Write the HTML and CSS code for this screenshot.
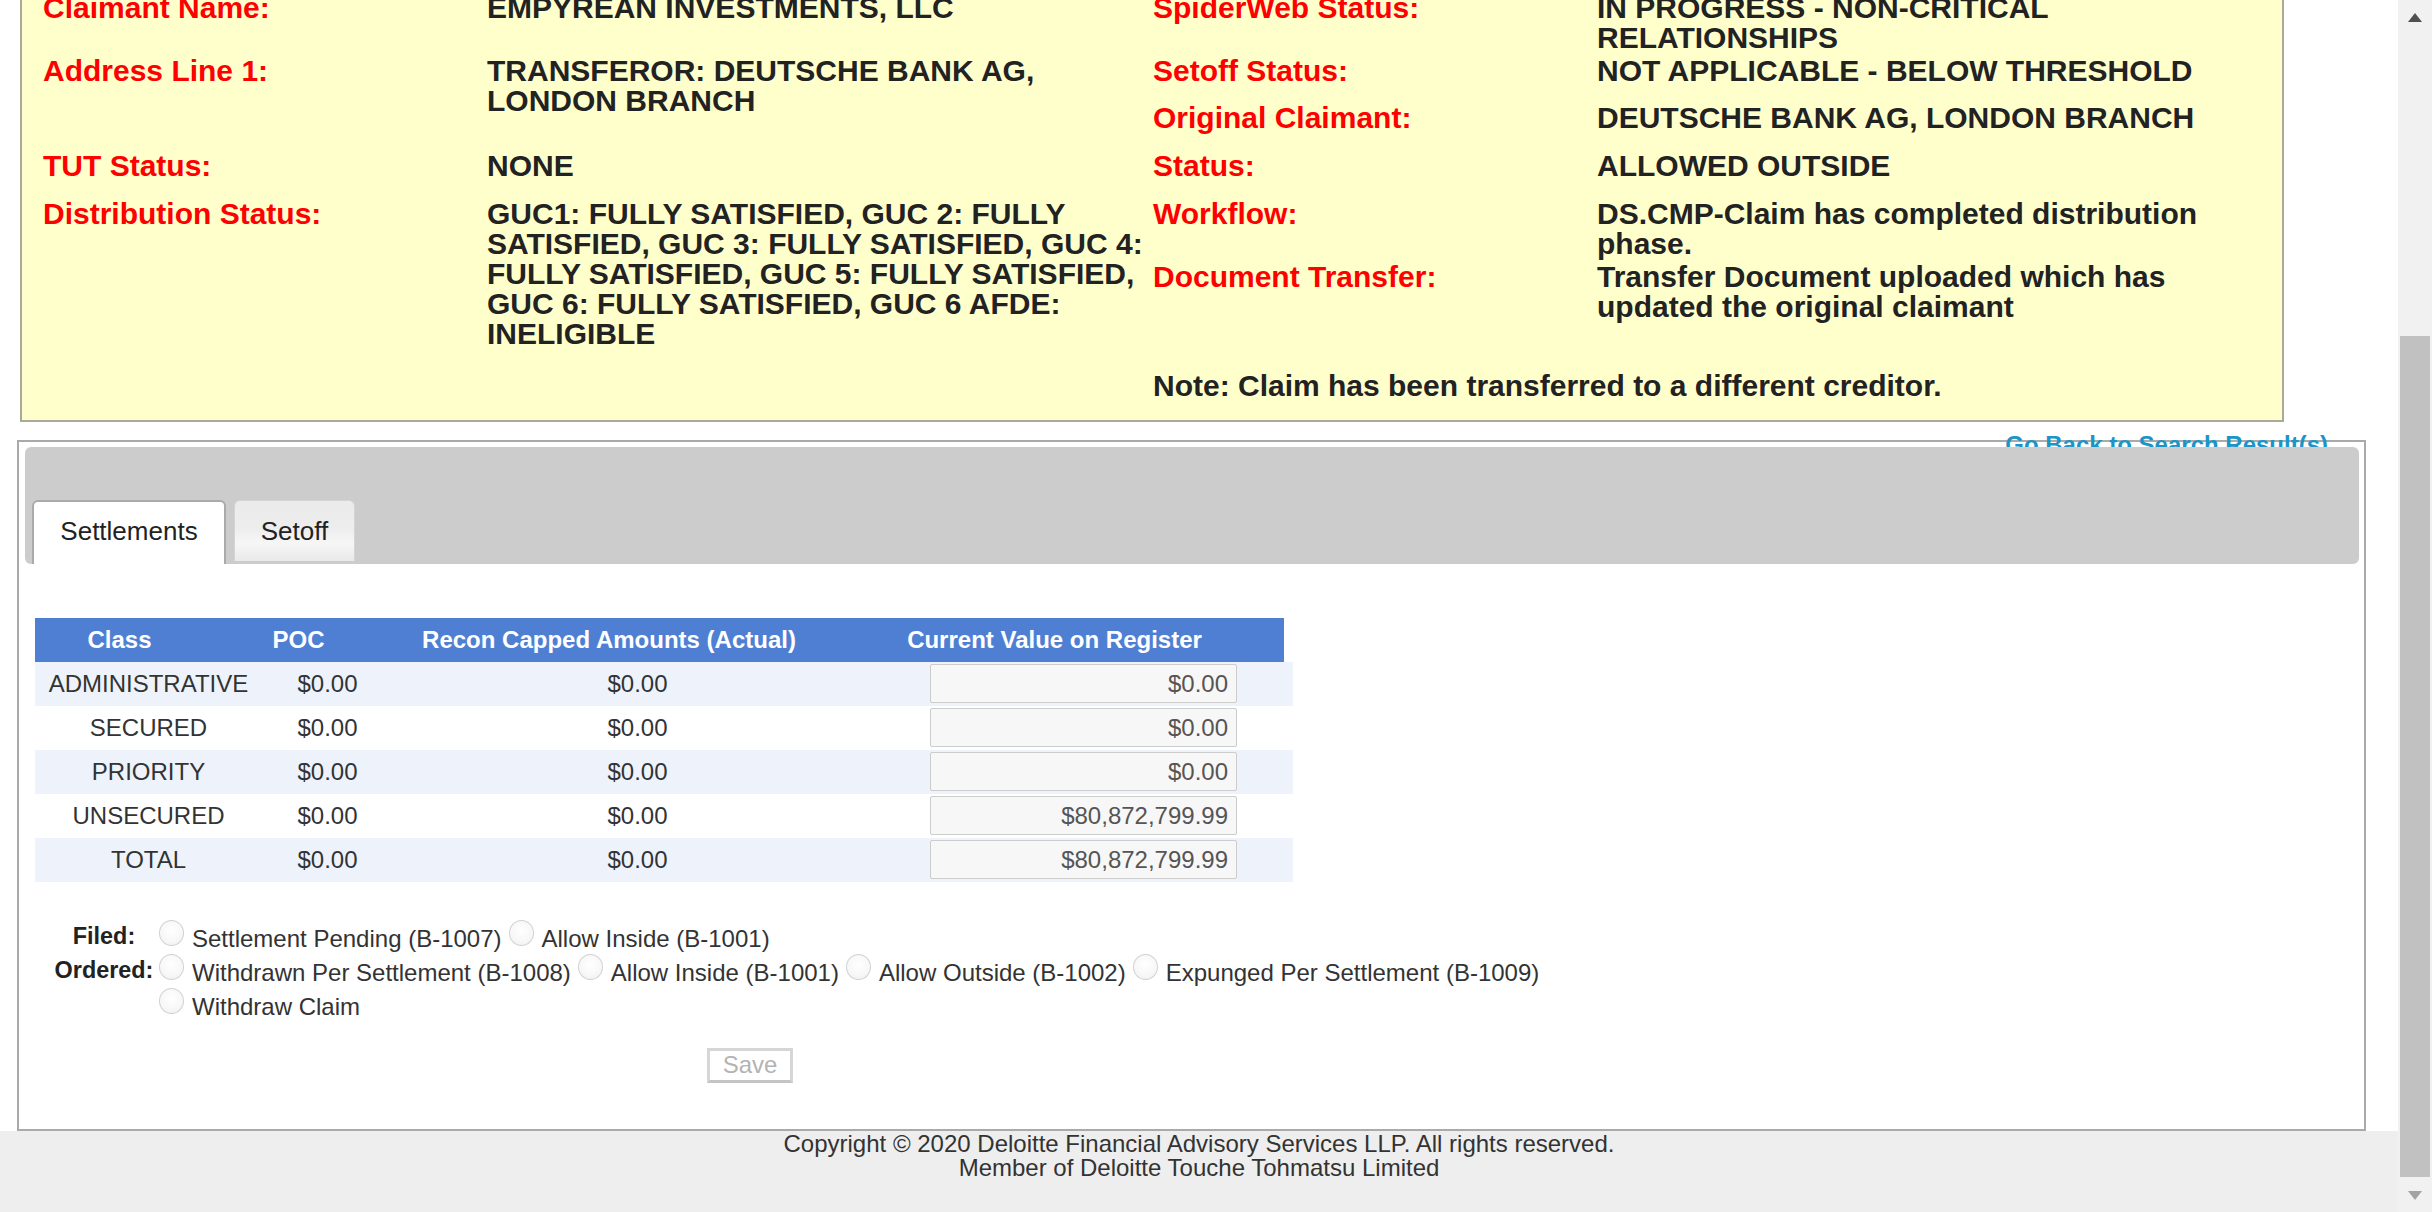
FILE: index.html
```html
<!DOCTYPE html>
<html lang="en">
<head>
<meta charset="utf-8">
<title>Claim Detail</title>
<link rel="stylesheet" href="styles.css">
</head>
<body>
<div class="screen">
  <div class="page">
    <div class="claim-box">
      <div class="claim-grid">
        <div class="lbl c1 r1">Claimant Name:</div>
        <div class="val c2 r1">EMPYREAN INVESTMENTS, LLC</div>
        <div class="lbl c3 r1">SpiderWeb Status:</div>
        <div class="val c4 r1">IN PROGRESS - NON-CRITICAL RELATIONSHIPS</div>

        <div class="lbl c1 r2">Address Line 1:</div>
        <div class="val c2 r2 span2">TRANSFEROR: DEUTSCHE BANK AG, LONDON BRANCH</div>
        <div class="lbl c3 r2">Setoff Status:</div>
        <div class="val c4 r2">NOT APPLICABLE - BELOW THRESHOLD</div>

        <div class="lbl c3 r3">Original Claimant:</div>
        <div class="val c4 r3">DEUTSCHE BANK AG, LONDON BRANCH</div>

        <div class="lbl c1 r4">TUT Status:</div>
        <div class="val c2 r4">NONE</div>
        <div class="lbl c3 r4">Status:</div>
        <div class="val c4 r4">ALLOWED OUTSIDE</div>

        <div class="lbl c1 r5">Distribution Status:</div>
        <div class="val c2 r5 span2">GUC1: FULLY SATISFIED, GUC 2: FULLY SATISFIED, GUC 3: FULLY SATISFIED, GUC 4: FULLY SATISFIED, GUC 5: FULLY SATISFIED, GUC 6: FULLY SATISFIED, GUC 6 AFDE: INELIGIBLE</div>
        <div class="lbl c3 r5">Workflow:</div>
        <div class="val c4 r5">DS.CMP-Claim has completed distribution phase.</div>

        <div class="lbl c3 r6">Document Transfer:</div>
        <div class="val c4 r6">Transfer Document uploaded which has updated the original claimant</div>

        <div class="val note r7">Note: Claim has been transferred to a different creditor.</div>
      </div>
    </div>

    <div class="panel">
      <a class="back-link" href="#">Go Back to Search Result(s)</a>
      <div class="tabbar">
        <div class="tab tab-active">Settlements</div>
        <div class="tab tab-idle">Setoff</div>
      </div>

      <div class="tab-content">
        <div class="amt-head">
          <div>Class</div>
          <div>POC</div>
          <div>Recon Capped Amounts (Actual)</div>
          <div>Current Value on Register</div>
        </div>
        <div class="amt-body">
          <div class="amt-row alt">
            <div>ADMINISTRATIVE</div><div>$0.00</div><div>$0.00</div>
            <div class="cell-input"><input class="amt-input" type="text" value="$0.00" readonly></div>
          </div>
          <div class="amt-row">
            <div>SECURED</div><div>$0.00</div><div>$0.00</div>
            <div class="cell-input"><input class="amt-input" type="text" value="$0.00" readonly></div>
          </div>
          <div class="amt-row alt">
            <div>PRIORITY</div><div>$0.00</div><div>$0.00</div>
            <div class="cell-input"><input class="amt-input" type="text" value="$0.00" readonly></div>
          </div>
          <div class="amt-row">
            <div>UNSECURED</div><div>$0.00</div><div>$0.00</div>
            <div class="cell-input"><input class="amt-input" type="text" value="$80,872,799.99" readonly></div>
          </div>
          <div class="amt-row alt">
            <div>TOTAL</div><div>$0.00</div><div>$0.00</div>
            <div class="cell-input"><input class="amt-input" type="text" value="$80,872,799.99" readonly></div>
          </div>
        </div>

        <div class="status-form">
          <div class="form-row">
            <div class="form-label">Filed:</div>
            <div class="options">
              <label class="option"><input type="radio" name="st"><span>Settlement Pending (B-1007)</span></label>
              <label class="option"><input type="radio" name="st"><span>Allow Inside (B-1001)</span></label>
            </div>
          </div>
          <div class="form-row">
            <div class="form-label">Ordered:</div>
            <div class="options">
              <label class="option"><input type="radio" name="st"><span>Withdrawn Per Settlement (B-1008)</span></label>
              <label class="option"><input type="radio" name="st"><span>Allow Inside (B-1001)</span></label>
              <label class="option"><input type="radio" name="st"><span>Allow Outside (B-1002)</span></label>
              <label class="option"><input type="radio" name="st"><span>Expunged Per Settlement (B-1009)</span></label>
              <label class="option"><input type="radio" name="st"><span>Withdraw Claim</span></label>
            </div>
          </div>
        </div>

        <div class="actions">
          <button class="save-btn" type="button" disabled>Save</button>
        </div>
      </div>
    </div>

    <footer class="footer">
      <div>Copyright © 2020 Deloitte Financial Advisory Services LLP. All rights reserved.</div>
      <div>Member of Deloitte Touche Tohmatsu Limited</div>
    </footer>
  </div>

  <div class="scrollbar">
    <div class="sb-btn">
      <svg width="14" height="9" viewBox="0 0 14 9"><polygon points="7,0 14,9 0,9" fill="#505050"/></svg>
    </div>
    <div class="sb-track"><div class="sb-thumb"></div></div>
    <div class="sb-btn">
      <svg width="14" height="9" viewBox="0 0 14 9"><polygon points="0,0 14,0 7,9" fill="#a3a3a3"/></svg>
    </div>
  </div>
</div>
</body>
</html>
```

FILE: styles.css
```css
html, body {
  margin: 0;
  padding: 0;
  background: #ffffff;
}

body {
  font-family: "Liberation Sans", Arial, sans-serif;
  color: #333333;
}

.screen {
  display: flex;
  width: 2432px;
  height: 1212px;
  overflow: hidden;
}

.page {
  width: 2398px;
  flex: 0 0 2398px;
  overflow: hidden;
}

/* ---------- yellow claim summary ---------- */
.claim-box {
  box-sizing: border-box;
  width: 2264px;
  margin: -40px 0 0 20px;
  padding: 31px 0 19.5px 21px;
  background: #ffffcc;
  border: 2px solid #aaaa99;
}

.claim-grid {
  display: grid;
  grid-template-columns: 444px 666px 444px 666px;
  grid-template-rows: 62.7px 46.9px 48.3px 48.1px 63.5px 108.2px 30px;
  font-size: 30px;
  line-height: 30px;
  font-weight: bold;
}

.lbl { color: #ff0000; }
.val { color: #222222; }

.c1 { grid-column: 1; }
.c2 { grid-column: 2; width: 672px; }
.c3 { grid-column: 3; }
.c4 { grid-column: 4; }
.r1 { grid-row: 1; }
.r2 { grid-row: 2; }
.r3 { grid-row: 3; }
.r4 { grid-row: 4; }
.r5 { grid-row: 5; }
.r6 { grid-row: 6; }
.r7 { grid-row: 7; }
.r2.span2 { grid-row: 2 / span 2; }
.r5.span2 { grid-row: 5 / span 2; }
.note { grid-column: 3 / span 2; }

/* ---------- settlements panel ---------- */
.panel {
  position: relative;
  box-sizing: border-box;
  width: 2349px;
  margin: 18px 0 0 17px;
  padding: 5px 5px 0 6px;
  border: 2px solid #aaaaaa;
}

.back-link {
  position: absolute;
  top: -11.5px;
  right: 36px;
  z-index: 0;
  font-size: 24px;
  line-height: 27.6px;
  font-weight: bold;
  color: #1b95c8;
  text-decoration: none;
}

.tabbar {
  position: relative;
  z-index: 1;
  box-sizing: border-box;
  height: 117px;
  padding: 53px 0 0 7px;
  display: flex;
  align-items: flex-start;
  gap: 8px;
  background: #cccccc;
  border-radius: 6px;
}

.tab {
  box-sizing: border-box;
  font-size: 26px;
  line-height: 30px;
  color: #222222;
  text-align: center;
  border-radius: 6px 6px 0 0;
}

.tab-active {
  width: 194px;
  height: 64px;
  padding-top: 14px;
  background: #ffffff;
  border: 2px solid #aaaaaa;
  border-bottom: none;
}

.tab-idle {
  width: 121px;
  height: 61px;
  padding-top: 15px;
  border: 1px solid #d4d4d4;
  border-bottom: none;
  background: linear-gradient(#ebebeb 0%, #ededed 45%, #f6f6f6 70%, #e9e9e9 100%);
}

.tab-content {
  padding: 54px 0 46px 10px;
}

.amt-head {
  display: grid;
  grid-template-columns: 169px 189px 432px 459px;
  width: 1249px;
  height: 43.4px;
  align-items: center;
  background: #4f7fd3;
  color: #ffffff;
  font-size: 24px;
  font-weight: bold;
  text-align: center;
}

.amt-body {
  width: 1258px;
  font-size: 24px;
  color: #333333;
}

.amt-row {
  display: grid;
  grid-template-columns: 227px 131px 489px 411px;
  height: 44px;
  align-items: center;
  text-align: center;
  background: #ffffff;
}

.amt-row.alt {
  background: #eef3fb;
}

.cell-input {
  display: flex;
  padding-left: 48px;
}

.amt-input {
  box-sizing: border-box;
  width: 307px;
  height: 39px;
  margin: 0;
  padding: 0 8px 0 0;
  border: 1px solid #cccccc;
  border-radius: 2px;
  background: #f7f7f7;
  color: #555555;
  font-family: "Liberation Sans", Arial, sans-serif;
  font-size: 24px;
  text-align: right;
  outline: none;
}

.status-form {
  margin: 38px 0 0 14px;
}

.form-row {
  display: flex;
  align-items: flex-start;
}

.form-label {
  width: 110px;
  flex: 0 0 110px;
  margin-top: 2px;
  font-size: 23.4px;
  line-height: 28px;
  font-weight: bold;
  color: #222222;
  text-align: center;
}

.options {
  display: flex;
  flex-wrap: wrap;
  column-gap: 7px;
  width: 1450px;
}

.option {
  display: flex;
  align-items: flex-start;
  height: 34px;
  font-size: 24px;
  line-height: 28px;
  color: #333333;
}

.option input {
  appearance: none;
  -webkit-appearance: none;
  box-sizing: border-box;
  width: 25px;
  height: 26px;
  margin: 0;
  border: 1px solid #d2d2d2;
  border-radius: 50%;
  background: radial-gradient(circle at 50% 40%, #ffffff 0%, #f7f7f7 60%, #ececec 100%);
}

.option span {
  margin: 5px 0 0 8px;
}

.actions {
  margin: 26px 0 0 672px;
}

.save-btn {
  box-sizing: border-box;
  width: 86px;
  height: 35.5px;
  margin: 0;
  padding: 0;
  background: #ffffff;
  border: 3px solid #d6d6d6;
  border-bottom-color: #c4c4c4;
  color: #b3b3b3;
  font-family: "Liberation Sans", Arial, sans-serif;
  font-size: 24px;
}

/* ---------- footer ---------- */
.footer {
  box-sizing: border-box;
  height: 100px;
  padding-top: 1.3px;
  background: #eeeeee;
  text-align: center;
  font-size: 24px;
  line-height: 24px;
  color: #333333;
}

/* ---------- fake scrollbar ---------- */
.scrollbar {
  width: 34px;
  flex: 0 0 34px;
  display: flex;
  flex-direction: column;
  background: #f1f1f1;
}

.sb-btn {
  height: 34px;
  flex: 0 0 34px;
  display: flex;
  align-items: center;
  justify-content: center;
}

.sb-track {
  flex: 1;
  padding: 302px 2px 0 2px;
}

.sb-thumb {
  height: 841px;
  background: #c1c1c1;
}
```
